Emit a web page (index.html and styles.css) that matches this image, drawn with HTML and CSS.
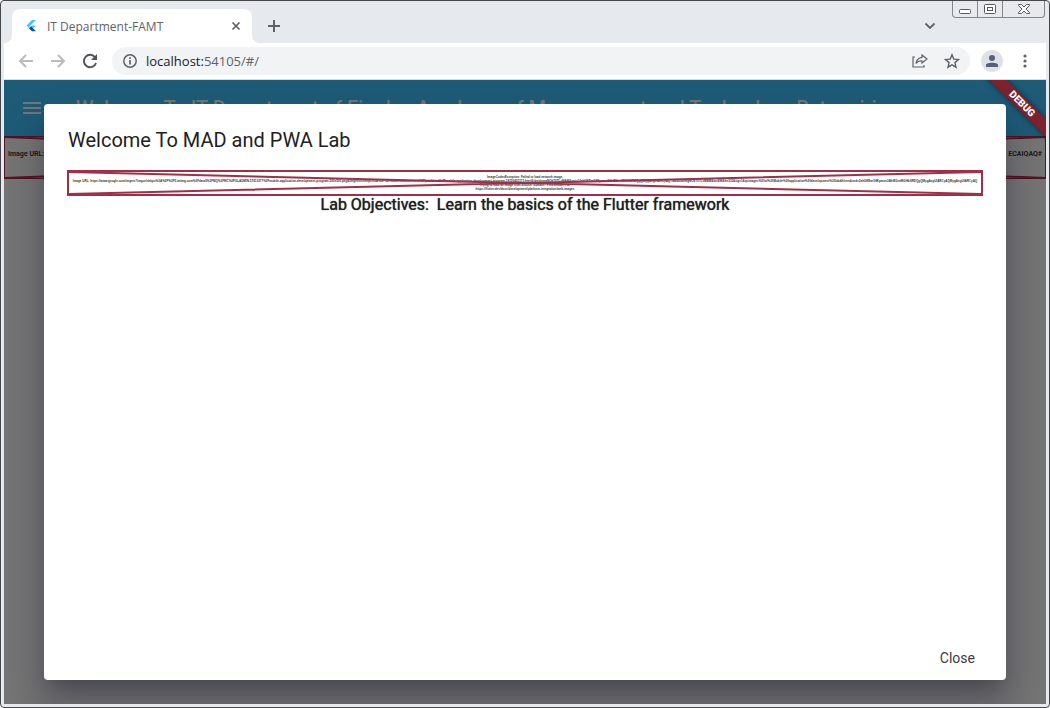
FILE: index.html
```
<!DOCTYPE html>
<html lang="en">
<head>
<meta charset="utf-8">
<title>IT Department-FAMT</title>
<link rel="stylesheet" href="styles.css">
</head>
<body>
<div class="window">
  <header class="tabstrip">
    <div class="tab">
      <svg class="favicon" width="12" height="14" viewBox="0 0 12 14" aria-hidden="true"><path d="M7 1h4L3.500 8.500l-2-2z" fill="#47c5fb"/><path d="M7 6.500h4L6 11.200 4 9z" fill="#47c5fb"/><path d="M4 9.200l2-1.900 5 4.900H7z" fill="#00569e"/></svg>
      <span class="tab-title">IT Department-FAMT</span>
      <button class="icon-button" aria-label="Close tab"><svg width="10" height="10" viewBox="0 0 10 10"><path d="M1.500 1.500l7 7M8.500 1.500l-7 7" stroke="#5f6368" stroke-width="1.700"/></svg></button>
    </div>
    <button class="icon-button new-tab" aria-label="New tab"><svg width="12" height="12" viewBox="0 0 12 12"><path d="M6 0v12M0 6h12" stroke="#5f6368" stroke-width="2"/></svg></button>
    <button class="icon-button tab-search" aria-label="Search tabs"><svg width="12" height="8" viewBox="0 0 12 8"><path d="M1.500 1.500L6 6l4.500-4.500" fill="none" stroke="#5f6368" stroke-width="1.800"/></svg></button>
    <div class="window-controls">
      <button aria-label="Minimize"><svg width="12" height="6" viewBox="0 0 12 6"><rect x=".5" y=".5" width="11" height="4" rx="1" fill="#fff" stroke="#55585c"/></svg></button>
      <button aria-label="Maximize"><svg width="12" height="10" viewBox="0 0 12 10"><rect x=".5" y=".5" width="11" height="9" rx="1" fill="#fff" stroke="#55585c"/><rect x="3.500" y="3.500" width="5" height="3" fill="#fff" stroke="#55585c"/></svg></button>
      <button class="wide" aria-label="Close window"><svg width="12" height="10" viewBox="0 0 12 10"><path d="M.5.5h3L6 3 8.500.5h3v1L8 5l3.500 3.500v1h-3L6 7 3.500 9.500h-3v-1L4 5 .5 1.500z" fill="#fff" stroke="#55585c"/></svg></button>
    </div>
  </header>
  <nav class="toolbar">
    <button class="icon-button" aria-label="Back"><svg width="16" height="14" viewBox="0 0 16 14"><path d="M15 7H2M8 1L2 7l6 6" fill="none" stroke="#b9bbbe" stroke-width="2"/></svg></button>
    <button class="icon-button" aria-label="Forward"><svg width="16" height="14" viewBox="0 0 16 14"><path d="M1 7h13M8 1l6 6-6 6" fill="none" stroke="#b9bbbe" stroke-width="2"/></svg></button>
    <button class="icon-button" aria-label="Reload"><svg width="16" height="16" viewBox="0 0 16 16"><path d="M13.200 4.500A6.200 6.200 0 1 0 14 10" fill="none" stroke="#505459" stroke-width="2"/><path d="M15 1v6H9z" fill="#505459"/></svg></button>
    <div class="omnibox">
      <svg width="14" height="14" viewBox="0 0 14 14" aria-hidden="true"><circle cx="7" cy="7" r="6.200" fill="none" stroke="#5f6368" stroke-width="1.500"/><path d="M7 6v4.500M7 3.300v1.600" stroke="#5f6368" stroke-width="1.700"/></svg>
      <span class="url">localhost:<span class="url-path">54105/#/</span></span>
      <button class="icon-button" aria-label="Share"><svg width="16" height="14" viewBox="0 0 16 14"><path d="M3 3H1v10h11v-2" fill="none" stroke="#5f6368" stroke-width="1.200"/><path d="M10 1l5 4-5 4V7Q6 6.700 4 9.500 4.800 4 10 3.300z" fill="none" stroke="#5f6368" stroke-width="1.200"/></svg></button>
      <button class="icon-button" aria-label="Bookmark"><svg width="16" height="16" viewBox="0 0 16 16"><path d="M8 1.800l1.800 4.300 4.700.4-3.600 3.100 1.100 4.600L8 11.800l-4 2.400 1.100-4.600-3.600-3.100 4.700-.4z" fill="none" stroke="#5f6368" stroke-width="1.400"/></svg></button>
    </div>
    <button class="icon-button avatar" aria-label="Profile"><svg width="14" height="14" viewBox="0 0 14 14"><circle cx="7" cy="4" r="3" fill="#55607a"/><path d="M1 13v-1.800C1 8 13 8 13 11.200V13z" fill="#55607a"/></svg></button>
    <button class="icon-button menu" aria-label="Menu"><svg width="4" height="14" viewBox="0 0 4 14"><g fill="#5f6368"><circle cx="2" cy="2" r="1.600"/><circle cx="2" cy="7" r="1.600"/><circle cx="2" cy="12" r="1.600"/></g></svg></button>
  </nav>
  <main class="page">
    <div class="appbar">
      <button class="icon-button" aria-label="Open navigation menu"><svg width="18" height="12" viewBox="0 0 18 12"><path d="M0 1h18M0 6h18M0 11h18" stroke="#757575" stroke-width="2"/></svg></button>
      <h1>Welcome To IT Department of Finolex Academy of Management and Technology,Ratnagiri</h1>
    </div>
    <div class="error-box page-error">
      <svg class="cross" width="100%" height="100%" viewBox="0 0 100 100" preserveAspectRatio="none" aria-hidden="true"><path d="M0 0L100 100M100 0L0 100"/></svg>
      <div class="error-row"><span>Image URL:</span><span>ECAIQAQ#</span></div>
    </div>
    <div class="debug">DEBUG</div>
    <section class="dialog" role="dialog" aria-labelledby="dialog-title">
      <h2 id="dialog-title">Welcome To MAD and PWA Lab</h2>
      <div class="error-box dialog-error">
        <p>ImageCodecException: Failed to load network image.</p>
        <p>Image URL: https://www.google.com/imgres?imgurl=https%3A%2F%2F5.imimg.com%2Fdata5%2FMQ%2FMC%2FGLADMIN-57613277%2Fmobile-application-development-program-500x500.png&amp;imgrefurl=https%3A%2F%2Fwww.indiamart.com%2Fproddetail%2Fmobile-application-development-program-19720435173.html&amp;tbnid=mgNOkT0TLsMAM&amp;vet=12ahUKEwi18Kpmos2AhWJnnMGHbSRDQgQMygAegUIARCyAQ..i&amp;docid=mgNOkT0TLsMAM&amp;w=499&amp;h=332&amp;itg=1&amp;q=images%20of%20Mobile%20application%20development%20lab&amp;hl=en&amp;ved=2ahUKEwi18Kpmos2AhWJnnMGHbSRDQgQMygAegUIARCyAQMygAegUIARCyAQ</p>
        <p>Trying to load an image from another domain? Find answers at:</p>
        <p>https://flutter.dev/docs/development/platform-integration/web-images</p>
        <svg class="cross" width="100%" height="100%" viewBox="0 0 100 100" preserveAspectRatio="none" aria-hidden="true"><path d="M0 0L100 100M100 0L0 100"/></svg>
      </div>
      <p class="objective">Lab Objectives:&nbsp; Learn the basics of the Flutter framework</p>
      <div class="actions"><button>Close</button></div>
    </section>
  </main>
</div>
</body>
</html>
```
FILE: styles.css
```
* { box-sizing: border-box; }
body { margin: 0; background: #fff; font-family: Roboto, "Liberation Sans", sans-serif; }
h1, h2, p { margin: 0; font-weight: 400; }
button { padding: 0; border: 0; background: none; font: inherit; color: inherit; }
svg { display: block; }
.icon-button { display: grid; place-items: center; flex: none; }

.window {
  display: flex;
  flex-direction: column;
  height: 100vh;
  padding: 0 3px 3px;
  border: 1px solid #45474b;
  border-radius: 4px;
  background: #e6e9ed;
  overflow: hidden;
}

.tabstrip { display: flex; height: 42px; flex: none; padding-left: 8px; }
.tab {
  position: relative;
  display: flex;
  align-items: center;
  width: 240px;
  margin-top: 8px;
  padding: 0 11px 0 14px;
  border-radius: 8px 8px 0 0;
  background: #fff;
  font-family: "Open Sans", "Noto Sans", sans-serif;
  font-size: 12px;
  color: #5f6368;
}
.tab::before, .tab::after {
  content: "";
  position: absolute;
  bottom: 0;
  width: 8px;
  height: 8px;
}
.tab::before { right: 100%; background: radial-gradient(circle at 0 0, transparent 8px, #fff 8px); }
.tab::after { left: 100%; background: radial-gradient(circle at 100% 0, transparent 8px, #fff 8px); }
.favicon { margin-left: -1px; }
.tab-title { flex: 1; margin-left: 10px; white-space: nowrap; }
.new-tab { width: 44px; margin-top: 8px; }
.tab-search { width: 20px; margin: 8px 12px 0 auto; }
.window-controls {
  display: flex;
  height: 17px;
  margin-right: 1px;
  border: 1px solid #83868a;
  border-top: 0;
  border-radius: 0 0 4px 4px;
}
.window-controls button { display: grid; place-items: center; width: 25px; border-right: 1px solid #83868a; }
.window-controls button:first-child { padding-top: 5px; }
.window-controls .wide { width: 41px; border-right: 0; }

.toolbar {
  display: flex;
  align-items: center;
  height: 37px;
  flex: none;
  padding: 0 15px 0 14px;
  gap: 16px;
  border-bottom: 1px solid #d8dbde;
  background: #fff;
}
.omnibox {
  display: flex;
  align-items: center;
  flex: 1;
  height: 28px;
  margin-left: -2px;
  padding: 0 10px 0 11px;
  gap: 16px;
  border-radius: 14px;
  background: #f1f3f4;
  font-family: "Open Sans", "Noto Sans", sans-serif;
  font-size: 13px;
  color: #202124;
}
.url { flex: 1; margin-left: -7px; }
.url-path { color: #5f6368; }
.avatar { width: 22px; height: 22px; margin-left: -5px; border-radius: 50%; background: #dee1e6; }
.menu { width: 12px; }

.page { position: relative; flex: 1; min-height: 0; overflow: hidden; background: #757575; }
.appbar { display: flex; align-items: center; gap: 35px; height: 56px; padding-left: 19px; background: #1e5b77; color: #757575; }
.appbar h1 { font-size: 20px; line-height: 24px; font-weight: 500; white-space: nowrap; }

.error-box { position: relative; border: 2px solid #9f3048; overflow: hidden; color: #333; font-weight: 700; white-space: nowrap; }
.cross { position: absolute; inset: 0; }
.cross path { fill: none; stroke: #9f3048; stroke-width: 2px; vector-effect: non-scaling-stroke; }
.page-error { height: 43px; border-width: 1px; border-color: #541424; color: #1a1a1a; }
.page-error .cross path { stroke: #541424; }
.error-row { display: flex; justify-content: space-between; padding: 11px 3px; font-size: 7px; line-height: 12px; }

.debug {
  position: absolute;
  top: 18px;
  right: -24px;
  width: 96px;
  height: 12px;
  background: #7d222e;
  box-shadow: 0 0 6px #0008;
  color: #fff;
  font-size: 10px;
  font-weight: 900;
  line-height: 12px;
  text-align: center;
  transform: rotate(45deg);
}

.dialog {
  position: absolute;
  inset: 24px 40px;
  display: flex;
  flex-direction: column;
  padding: 24px 23px 8px;
  border-radius: 4px;
  background: #fff;
  color: #212121;
  box-shadow: 0 11px 15px -7px #0003, 0 24px 38px 3px #0024, 0 9px 46px 8px #0020;
}
.dialog h2 { margin-bottom: 18px; padding-left: 1px; font-size: 20px; line-height: 24px; }
.dialog-error {
  height: 26px;
  padding-top: 3px;
  text-align: center;
  font-family: "Liberation Sans", Arial, sans-serif;
  font-size: 3px;
  line-height: 4px;
}
.dialog-error p { font-weight: 700; }
.objective { font-size: 16px; line-height: 17px; text-align: center; text-shadow: 0 0 1px currentColor; }
.actions { display: flex; justify-content: flex-end; margin-top: auto; }
.actions button { height: 28px; padding: 0 8px; font-size: 14px; color: #3c3c3c; }
```
